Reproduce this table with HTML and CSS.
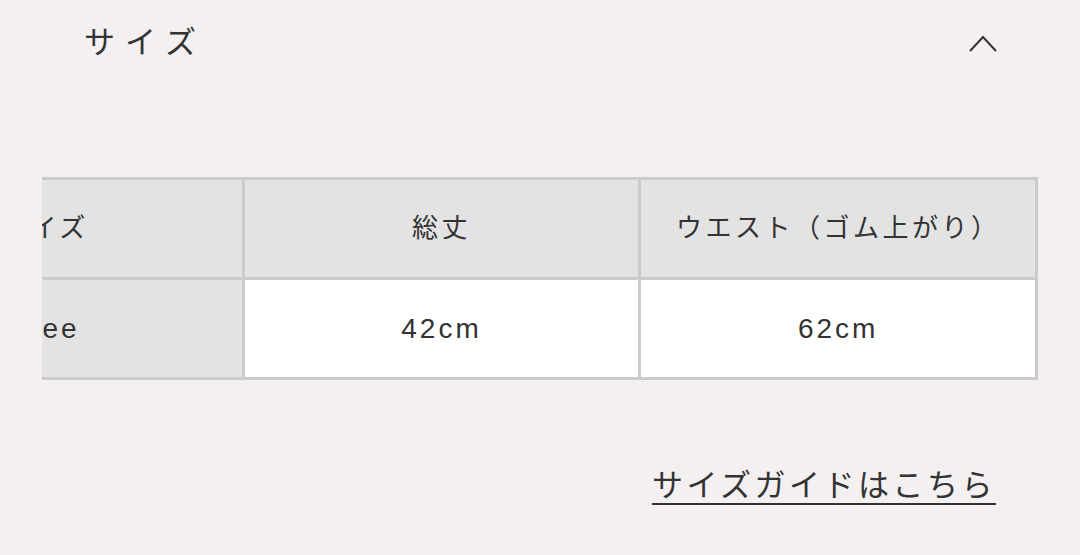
FILE: index.html
```html
<!DOCTYPE html>
<html lang="ja">
<head>
<meta charset="utf-8">
<link rel="stylesheet" href="styles.css">
</head>
<body>
<section class="accordion">
  <header class="acc-head">
    <h2 class="acc-title">サイズ</h2>
    <svg class="chevron" width="30" height="20" viewBox="0 0 30 20"><path d="M2 18 L15 4 L28 18" fill="none" stroke="#333" stroke-width="2"/></svg>
  </header>
  <div class="table-scroll">
    <table class="size-table">
      <tr class="head-row">
        <th>サイズ</th>
        <th>総丈</th>
        <th>ウエスト（ゴム上がり）</th>
      </tr>
      <tr>
        <th class="latin">Free</th>
        <td class="latin">42cm</td>
        <td class="latin">62cm</td>
      </tr>
    </table>
  </div>
  <div class="guide">
    <a class="guide-link" href="#">サイズガイドはこちら</a>
  </div>
</section>
</body>
</html>
```

FILE: styles.css
```css
html, body {
  margin: 0;
  padding: 0;
  background: #f4f0f1;
  width: 1080px;
  height: 555px;
  overflow: hidden;
}
body {
  font-family: "Liberation Sans", "Noto Sans CJK JP", sans-serif;
  color: #333;
}
.acc-head {
  display: flex;
  align-items: center;
  justify-content: space-between;
  height: 84px;
  padding: 0 82px 0 84px;
}
.acc-title {
  margin: 0;
  font-size: 31px;
  font-weight: 400;
  letter-spacing: 10px;
  line-height: 1;
}
.chevron {
  display: block;
  margin-top: 2px;
}
.table-scroll {
  margin: 93px 0 0 42px;
  width: 996px;
  overflow: hidden;
}
.size-table {
  margin-left: -197px;
  border-collapse: collapse;
  table-layout: fixed;
  width: 1193px;
  font-size: 26px;
  letter-spacing: 3.5px;
}
.size-table th,
.size-table td {
  border: 3px solid #cbcbcb;
  height: 97px;
  padding: 0;
  text-align: center;
  font-weight: 400;
  color: #333;
}
.size-table .head-row th {
  height: 91px;
  padding-bottom: 6px;
}
.size-table th {
  background: #e3e3e3;
}
.size-table td {
  background: #fff;
}
.size-table .latin {
  font-size: 28px;
  letter-spacing: 3px;
}
.guide {
  display: flex;
  justify-content: flex-end;
  padding: 90px 84px 0 0;
}
.guide-link {
  font-size: 31px;
  letter-spacing: 3.5px;
  color: #333;
  text-decoration: underline;
  text-decoration-thickness: 2px;
  text-underline-offset: 7px;
  line-height: 1;
}
```
